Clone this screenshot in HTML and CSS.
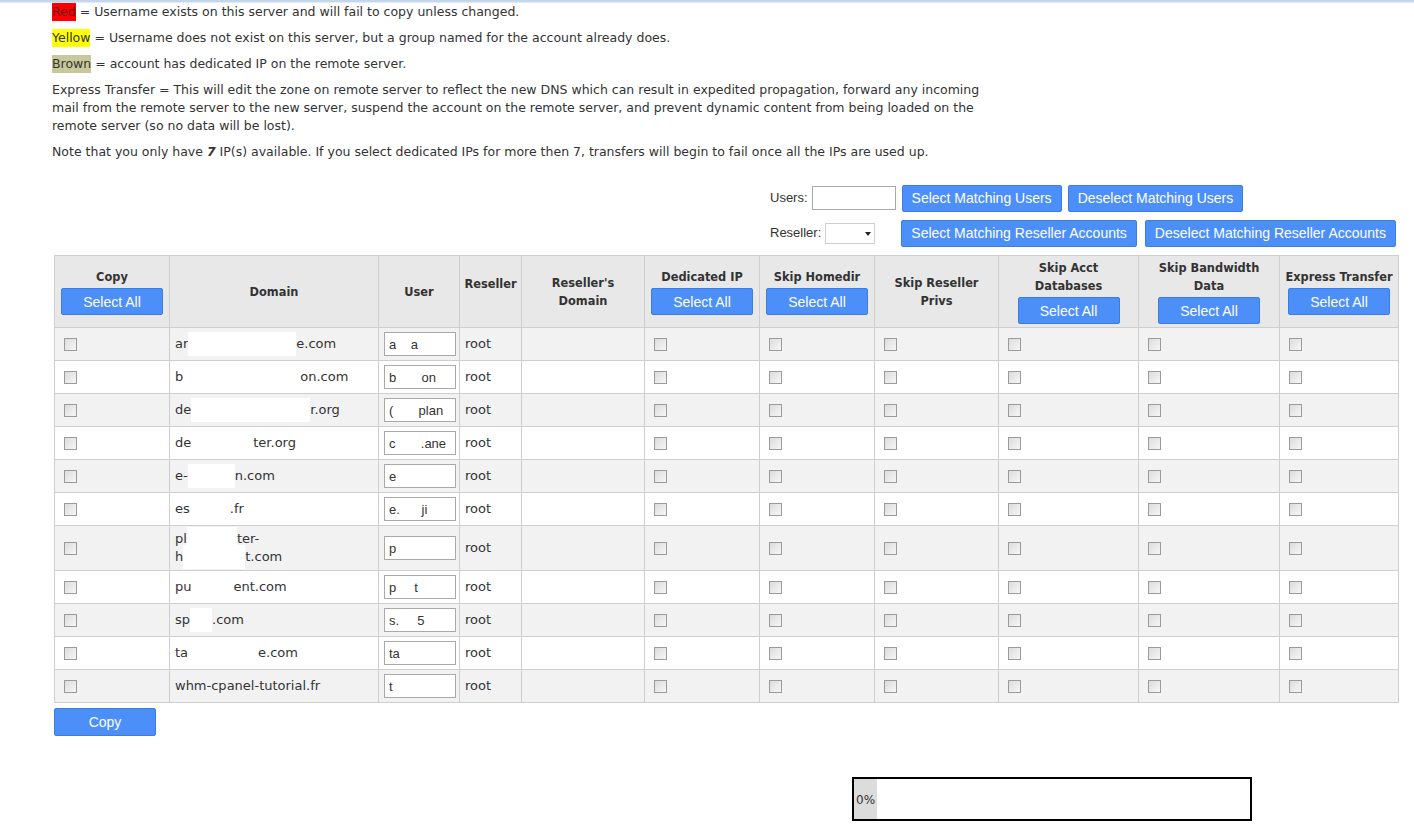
FILE: index.html
```html
<!DOCTYPE html>
<html lang="en">
<head>
    <meta charset="UTF-8">
    <title>Transfer Accounts</title>
    <link rel="stylesheet" href="styles.css">
</head>
<body>
    <div class="topline"></div>
    <div class="page">
        <div class="notes">
            <p><span class="tag red">Red</span> = Username exists on this server and will fail to copy unless changed.</p>
            <p><span class="tag yellow">Yellow</span> = Username does not exist on this server, but a group named for the account already does.</p>
            <p><span class="tag brown">Brown</span> = account has dedicated IP on the remote server.</p>
            <p>Express Transfer = This will edit the zone on remote server to reflect the new DNS which can result in expedited propagation, forward any incoming mail from the remote server to the new server, suspend the account on the remote server, and prevent dynamic content from being loaded on the remote server (so no data will be lost).</p>
            <p>Note that you only have <b><i>7</i></b> IP(s) available. If you select dedicated IPs for more then 7, transfers will begin to fail once all the IPs are used up.</p>
        </div>

        <div class="filters">
            <div class="filter-box">
                <div class="filter-row">
                    <label class="users-label">Users:</label>
                    <input type="text" class="users-input">
                    <button class="btn">Select Matching Users</button>
                    <button class="btn">Deselect Matching Users</button>
                </div>
                <div class="filter-row wide-gap">
                    <label>Reseller:</label>
                    <span class="select-wrap"><select class="reseller-select"><option></option></select></span>
                    <button class="btn">Select Matching Reseller Accounts</button>
                    <button class="btn">Deselect Matching Reseller Accounts</button>
                </div>
            </div>
        </div>

        <table class="accounts">
            <colgroup>
                <col class="c-copy"><col class="c-domain"><col class="c-user"><col class="c-reseller">
                <col class="c-rdomain"><col class="c-ip"><col class="c-home"><col class="c-privs">
                <col class="c-db"><col class="c-bw"><col class="c-express">
            </colgroup>
            <thead>
                <tr>
                    <th>Copy<button class="btn btn-all">Select All</button></th>
                    <th>Domain</th>
                    <th>User</th>
                    <th class="th-reseller">Reseller</th>
                    <th>Reseller's<br>Domain</th>
                    <th>Dedicated IP<button class="btn btn-all">Select All</button></th>
                    <th>Skip Homedir<button class="btn btn-all">Select All</button></th>
                    <th>Skip Reseller<br>Privs</th>
                    <th>Skip Acct<br>Databases<button class="btn btn-all">Select All</button></th>
                    <th>Skip Bandwidth<br>Data<button class="btn btn-all">Select All</button></th>
                    <th>Express Transfer<button class="btn btn-all">Select All</button></th>
                </tr>
            </thead>
            <tbody>
                <tr>
                    <td><input type="checkbox" class="cb"></td>
                    <td>ar<span class="mask m108"></span>e.com</td>
                    <td><input type="text" class="user" value="a    a"></td>
                    <td>root</td><td></td>
                    <td><input type="checkbox" class="cb"></td><td><input type="checkbox" class="cb"></td><td><input type="checkbox" class="cb"></td>
                    <td><input type="checkbox" class="cb"></td><td><input type="checkbox" class="cb"></td><td><input type="checkbox" class="cb"></td>
                </tr>
                <tr>
                    <td><input type="checkbox" class="cb"></td>
                    <td>b<span class="mask m117"></span>on.com</td>
                    <td><input type="text" class="user" value="b       on"></td>
                    <td>root</td><td></td>
                    <td><input type="checkbox" class="cb"></td><td><input type="checkbox" class="cb"></td><td><input type="checkbox" class="cb"></td>
                    <td><input type="checkbox" class="cb"></td><td><input type="checkbox" class="cb"></td><td><input type="checkbox" class="cb"></td>
                </tr>
                <tr>
                    <td><input type="checkbox" class="cb"></td>
                    <td>de<span class="mask m119"></span>r.org</td>
                    <td><input type="text" class="user" value="(       plan"></td>
                    <td>root</td><td></td>
                    <td><input type="checkbox" class="cb"></td><td><input type="checkbox" class="cb"></td><td><input type="checkbox" class="cb"></td>
                    <td><input type="checkbox" class="cb"></td><td><input type="checkbox" class="cb"></td><td><input type="checkbox" class="cb"></td>
                </tr>
                <tr>
                    <td><input type="checkbox" class="cb"></td>
                    <td>de<span class="mask m62"></span>ter.org</td>
                    <td><input type="text" class="user" value="c       .ane"></td>
                    <td>root</td><td></td>
                    <td><input type="checkbox" class="cb"></td><td><input type="checkbox" class="cb"></td><td><input type="checkbox" class="cb"></td>
                    <td><input type="checkbox" class="cb"></td><td><input type="checkbox" class="cb"></td><td><input type="checkbox" class="cb"></td>
                </tr>
                <tr>
                    <td><input type="checkbox" class="cb"></td>
                    <td>e-<span class="mask m47"></span>n.com</td>
                    <td><input type="text" class="user" value="e"></td>
                    <td>root</td><td></td>
                    <td><input type="checkbox" class="cb"></td><td><input type="checkbox" class="cb"></td><td><input type="checkbox" class="cb"></td>
                    <td><input type="checkbox" class="cb"></td><td><input type="checkbox" class="cb"></td><td><input type="checkbox" class="cb"></td>
                </tr>
                <tr>
                    <td><input type="checkbox" class="cb"></td>
                    <td>es<span class="mask m40"></span>.fr</td>
                    <td><input type="text" class="user" value="e.      ji"></td>
                    <td>root</td><td></td>
                    <td><input type="checkbox" class="cb"></td><td><input type="checkbox" class="cb"></td><td><input type="checkbox" class="cb"></td>
                    <td><input type="checkbox" class="cb"></td><td><input type="checkbox" class="cb"></td><td><input type="checkbox" class="cb"></td>
                </tr>
                <tr>
                    <td><input type="checkbox" class="cb"></td>
                    <td>pl<span class="mask m50"></span>ter-<br>h<span class="mask m62"></span>t.com</td>
                    <td><input type="text" class="user" value="p"></td>
                    <td>root</td><td></td>
                    <td><input type="checkbox" class="cb"></td><td><input type="checkbox" class="cb"></td><td><input type="checkbox" class="cb"></td>
                    <td><input type="checkbox" class="cb"></td><td><input type="checkbox" class="cb"></td><td><input type="checkbox" class="cb"></td>
                </tr>
                <tr>
                    <td><input type="checkbox" class="cb"></td>
                    <td>pu<span class="mask m42"></span>ent.com</td>
                    <td><input type="text" class="user" value="p     t"></td>
                    <td>root</td><td></td>
                    <td><input type="checkbox" class="cb"></td><td><input type="checkbox" class="cb"></td><td><input type="checkbox" class="cb"></td>
                    <td><input type="checkbox" class="cb"></td><td><input type="checkbox" class="cb"></td><td><input type="checkbox" class="cb"></td>
                </tr>
                <tr>
                    <td><input type="checkbox" class="cb"></td>
                    <td>sp<span class="mask m22"></span>.com</td>
                    <td><input type="text" class="user" value="s.     5"></td>
                    <td>root</td><td></td>
                    <td><input type="checkbox" class="cb"></td><td><input type="checkbox" class="cb"></td><td><input type="checkbox" class="cb"></td>
                    <td><input type="checkbox" class="cb"></td><td><input type="checkbox" class="cb"></td><td><input type="checkbox" class="cb"></td>
                </tr>
                <tr>
                    <td><input type="checkbox" class="cb"></td>
                    <td>ta<span class="mask m70"></span>e.com</td>
                    <td><input type="text" class="user" value="ta"></td>
                    <td>root</td><td></td>
                    <td><input type="checkbox" class="cb"></td><td><input type="checkbox" class="cb"></td><td><input type="checkbox" class="cb"></td>
                    <td><input type="checkbox" class="cb"></td><td><input type="checkbox" class="cb"></td><td><input type="checkbox" class="cb"></td>
                </tr>
                <tr>
                    <td><input type="checkbox" class="cb"></td>
                    <td>whm-cpanel-tutorial.fr</td>
                    <td><input type="text" class="user" value="t"></td>
                    <td>root</td><td></td>
                    <td><input type="checkbox" class="cb"></td><td><input type="checkbox" class="cb"></td><td><input type="checkbox" class="cb"></td>
                    <td><input type="checkbox" class="cb"></td><td><input type="checkbox" class="cb"></td><td><input type="checkbox" class="cb"></td>
                </tr>
            </tbody>
        </table>

        <button class="btn btn-copy">Copy</button>

        <div class="progress">
            <div class="progress-fill">0%</div>
        </div>
    </div>
</body>
</html>
```

FILE: styles.css
```css
body { margin: 0; background: #fff; color: #333; font-family: "DejaVu Sans", Verdana, sans-serif; font-size: 13px; line-height: 18px; }
.topline { height: 2px; background: #c3d6ec; border-bottom: 1px solid #e4edf7; }
.page { padding: 0 0 0 52px; }

.notes { width: 945px; font-size: 12.5px; }
.notes p { margin: 0 0 8px; }
.tag { padding: 1px 0 2px; }
.red { background: #ff0000; color: #6b1010; }
.yellow { background: #ffff00; }
.brown { background: #c8c89a; }

.filters { display: flex; justify-content: flex-end; padding: 16px 0 0; }
.filter-box { width: 644px; }
.filter-row { display: flex; align-items: center; height: 26px; margin-bottom: 9px; font-family: "Liberation Sans", Arial, sans-serif; font-size: 13px; }
.filter-row label { margin-right: 4px; }
.users-input { width: 84px; height: 24px; box-sizing: border-box; border: 1px solid #a9a9a9; margin: 0 6px 0 0; padding: 2px; }
.select-wrap { position: relative; margin-right: 26px; }
.select-wrap::after { content: ""; position: absolute; right: 4px; top: 9px; border-left: 3px solid transparent; border-right: 3px solid transparent; border-top: 4px solid #222; }
.reseller-select { -webkit-appearance: none; appearance: none; width: 50px; height: 21px; border: 1px solid #cfcfcf; background: #fff; margin: 0; }

.btn { font-family: "Liberation Sans", Arial, sans-serif; font-size: 14px; color: #fff; background: #4d8ff9; border: 1px solid #3c7de4; border-radius: 2px; height: 27px; padding: 0 9px; margin-right: 6px; cursor: pointer; }
.wide-gap .btn { margin-right: 8px; }
.filter-row .btn:last-child { margin-right: 0; }

.accounts { table-layout: fixed; border-collapse: collapse; width: 1344px; margin: 0 0 5px 2px; }
.c-copy { width: 115px; } .c-domain { width: 209px; } .c-user { width: 81px; } .c-reseller { width: 62px; }
.c-rdomain { width: 123px; } .c-ip { width: 115px; } .c-home { width: 115px; } .c-privs { width: 124px; }
.c-db { width: 140px; } .c-bw { width: 141px; } .c-express { width: 119px; }
.accounts th, .accounts td { border: 1px solid #cecece; }
.accounts th { background: #e8e8e8; font-size: 11.4px; font-weight: bold; text-align: center; vertical-align: middle; padding: 3px 3px; }
.accounts th.th-reseller { padding-bottom: 19px; }
.accounts td { padding: 4px 5px; height: 24px; text-align: left; }
.accounts tbody tr:nth-child(odd) td { background: #f2f2f2; }
.btn-all { display: block; width: 102px; height: 27px; margin: 2px auto 0; }

.mask { display: inline-block; height: 24px; margin: -3px 0; vertical-align: top; background: #fff; }
.m22 { width: 22px; } .m40 { width: 40px; } .m42 { width: 42px; } .m47 { width: 47px; } .m50 { width: 50px; }
.m62 { width: 62px; } .m70 { width: 70px; } .m108 { width: 108px; } .m117 { width: 117px; } .m119 { width: 119px; }

.user { width: 72px; height: 24px; box-sizing: border-box; border: 1px solid #a9a9a9; margin: 0; padding: 2px 4px; font-family: "Liberation Sans", Arial, sans-serif; font-size: 13px; color: #333; vertical-align: middle; }
.cb { -webkit-appearance: none; appearance: none; width: 13px; height: 13px; margin: 0 0 0 4px; border: 1px solid #9b9b9b; background: linear-gradient(135deg, #dcdcdc, #f6f6f6); vertical-align: middle; }

.btn-copy { display: block; width: 102px; height: 28px; margin: 0 0 0 2px; }

.progress { width: 396px; height: 40px; border: 2px solid #000; margin: 41px 0 0 800px; }
.progress-fill { display: inline-block; height: 40px; line-height: 42px; background: #dcdcdc; padding: 0 2px; font-size: 12px; }
```
